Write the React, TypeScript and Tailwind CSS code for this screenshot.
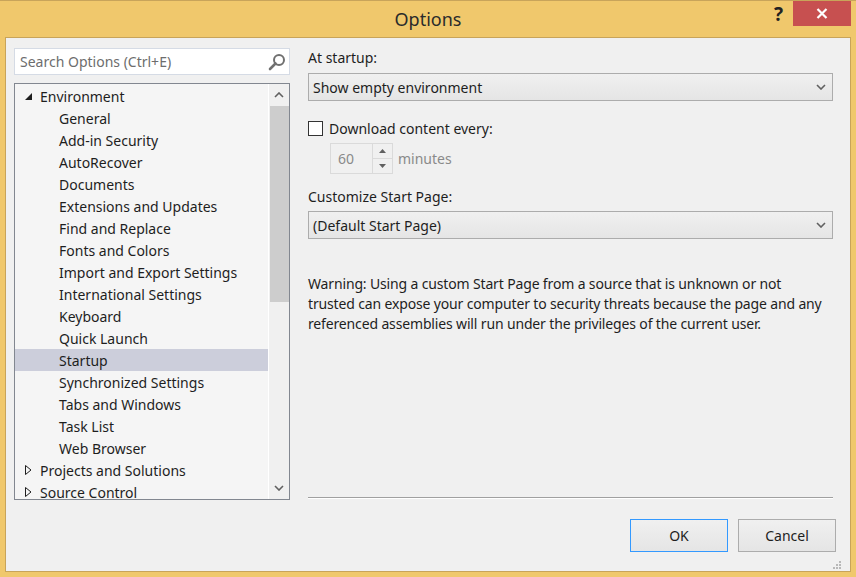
import React from 'react';

const treeItems: { label: string; level: 0 | 1; state?: 'open' | 'closed'; selected?: boolean }[] = [
  { label: 'Environment', level: 0, state: 'open' },
  { label: 'General', level: 1 },
  { label: 'Add-in Security', level: 1 },
  { label: 'AutoRecover', level: 1 },
  { label: 'Documents', level: 1 },
  { label: 'Extensions and Updates', level: 1 },
  { label: 'Find and Replace', level: 1 },
  { label: 'Fonts and Colors', level: 1 },
  { label: 'Import and Export Settings', level: 1 },
  { label: 'International Settings', level: 1 },
  { label: 'Keyboard', level: 1 },
  { label: 'Quick Launch', level: 1 },
  { label: 'Startup', level: 1, selected: true },
  { label: 'Synchronized Settings', level: 1 },
  { label: 'Tabs and Windows', level: 1 },
  { label: 'Task List', level: 1 },
  { label: 'Web Browser', level: 1 },
  { label: 'Projects and Solutions', level: 0, state: 'closed' },
  { label: 'Source Control', level: 0, state: 'closed' },
];

function Chevron({ up = false }: { up?: boolean }) {
  return (
    <svg width="10" height="6" viewBox="0 0 10 6" className={up ? 'rotate-180' : ''}>
      <path d="M1 1 L5 5 L9 1" fill="none" stroke="#606060" strokeWidth="1.6" />
    </svg>
  );
}

function Dropdown({ value }: { value: string }) {
  return (
    <div className="flex h-[28px] items-center justify-between border border-[#acacac] bg-gradient-to-b from-[#f0f0f0] to-[#e5e5e5] pl-[4px] pr-[6px]">
      <span>{value}</span>
      <Chevron />
    </div>
  );
}

export default function App() {
  return (
    <div
      className="flex h-[577px] w-[856px] flex-col border-t border-[#c8a45a] bg-[#f0c86c] text-[14px] text-[#1e1e1e]"
      style={{ fontFamily: '"Segoe UI", "Noto Sans", "Open Sans", sans-serif' }}
    >
      {/* Title bar */}
      <div className="relative flex h-[36px] shrink-0 items-center justify-center">
        <span className="text-[18px] text-[#2b2b2b]">Options</span>
        <div className="absolute right-[5px] top-0 flex h-[26px] items-start">
          <span className="mr-[10px] mt-[2px] text-[19px] font-bold leading-[22px] text-[#222]">?</span>
          <div className="flex h-[25px] w-[58px] items-center justify-center bg-[#c75050]">
            <svg width="12" height="11" viewBox="0 0 12 11">
              <path d="M1.5 1 L10.5 10 M10.5 1 L1.5 10" stroke="#fff" strokeWidth="2.2" />
            </svg>
          </div>
        </div>
      </div>

      {/* Client area */}
      <div className="mx-[5px] mb-[5px] flex flex-1 flex-col border border-[#c8a45a] bg-[#f0f0f0] px-[8px] pt-[10px]">
        <div className="flex">
          {/* Left column */}
          <div className="flex w-[276px] flex-col gap-[8px]">
            <div className="flex h-[27px] items-center justify-between border border-[#d5dbe5] bg-white pl-[5px] pr-[3px]">
              <span className="text-[#6d6d6d]">Search Options (Ctrl+E)</span>
              <svg width="18" height="18" viewBox="0 0 18 18">
                <circle cx="11" cy="7" r="5" fill="none" stroke="#707070" strokeWidth="2" />
                <path d="M7.5 10.5 L2 16" stroke="#707070" strokeWidth="2.6" strokeLinecap="round" />
              </svg>
            </div>
            <div className="flex h-[417px] border border-[#828790] bg-[#f5f5f5]">
              <div className="flex flex-1 flex-col overflow-hidden pt-[1px]">
                {treeItems.map((item) => (
                  <div
                    key={item.label}
                    className={`flex h-[22px] shrink-0 items-center ${item.selected ? 'bg-[#cccedb]' : ''} ${item.level === 1 ? 'pl-[44px]' : 'pl-[9px]'}`}
                  >
                    {item.level === 0 && (
                      <span className="mr-[8px] flex w-[8px] justify-center">
                        {item.state === 'open' ? (
                          <svg width="7" height="7" viewBox="0 0 7 7">
                            <path d="M7 0 L7 7 L0 7 Z" fill="#1e1e1e" />
                          </svg>
                        ) : (
                          <svg width="7" height="10" viewBox="0 0 7 10">
                            <path d="M0.5 0.5 L6 5 L0.5 9.5 Z" fill="none" stroke="#1e1e1e" strokeWidth="1" />
                          </svg>
                        )}
                      </span>
                    )}
                    <span>{item.label}</span>
                  </div>
                ))}
              </div>
              {/* Scrollbar */}
              <div className="flex w-[21px] flex-col items-center border-l border-white bg-[#f0f0f0]">
                <div className="flex h-[22px] items-center">
                  <Chevron up />
                </div>
                <div className="h-[196px] w-[19px] bg-[#cdcdcd]" />
                <div className="flex-1" />
                <div className="flex h-[22px] items-center">
                  <Chevron />
                </div>
              </div>
            </div>
          </div>

          {/* Right column */}
          <div className="ml-[18px] flex w-[525px] flex-col">
            <div className="h-[25px] leading-[20px]">At startup:</div>
            <Dropdown value="Show empty environment" />
            <div className="mt-[18px] flex h-[18px] items-center">
              <div className="h-[15px] w-[15px] border border-[#333] bg-white" />
              <span className="ml-[6px]">Download content every:</span>
            </div>
            <div className="ml-[22px] mt-[6px] flex items-center">
              <div className="flex h-[31px] w-[63px] border border-[#dadada]">
                <div className="flex flex-1 items-center pl-[7px] text-[#8a8a8a]">60</div>
                <div className="flex w-[20px] flex-col border-l border-[#dadada]">
                  <div className="flex flex-1 items-center justify-center border-b border-[#dadada]">
                    <svg width="7" height="4" viewBox="0 0 7 4">
                      <path d="M0 4 L3.5 0 L7 4 Z" fill="#606060" />
                    </svg>
                  </div>
                  <div className="flex flex-1 items-center justify-center">
                    <svg width="7" height="4" viewBox="0 0 7 4">
                      <path d="M0 0 L3.5 4 L7 0 Z" fill="#606060" />
                    </svg>
                  </div>
                </div>
              </div>
              <span className="ml-[5px] text-[#8a8a8a]">minutes</span>
            </div>
            <div className="mt-[13px] h-[24px] leading-[20px]">Customize Start Page:</div>
            <Dropdown value="(Default Start Page)" />
            <p className="mt-[35px] w-[525px] leading-[20px] tracking-[-0.15px]">
              Warning: Using a custom Start Page from a source that is unknown or not
              <br />
              trusted can expose your computer to security threats because the page and any
              <br />
              referenced assemblies will run under the privileges of the current user.
            </p>
            <div className="flex-1" />
            <div className="mb-[1px] h-[2px] border-t border-[#a0a0a0] border-b border-b-white" />
          </div>
        </div>

        {/* Buttons */}
        <div className="mt-[19px] flex justify-end gap-[10px] pr-[6px]">
          <button className="h-[33px] w-[98px] border border-[#3399ff] bg-gradient-to-b from-[#f0f0f0] to-[#e5e5e5]">OK</button>
          <button className="h-[33px] w-[98px] border border-[#acacac] bg-gradient-to-b from-[#f0f0f0] to-[#e5e5e5]">
            Cancel
          </button>
        </div>
        <div className="flex flex-1 items-end justify-end pb-[1px]">
          <svg width="10" height="10" viewBox="0 0 10 10">
            <rect x="7" y="1" width="2" height="2" fill="#b8b8b8" />
            <rect x="4" y="4" width="2" height="2" fill="#b8b8b8" />
            <rect x="7" y="4" width="2" height="2" fill="#b8b8b8" />
            <rect x="1" y="7" width="2" height="2" fill="#b8b8b8" />
            <rect x="4" y="7" width="2" height="2" fill="#b8b8b8" />
            <rect x="7" y="7" width="2" height="2" fill="#b8b8b8" />
          </svg>
        </div>
      </div>
    </div>
  );
}
